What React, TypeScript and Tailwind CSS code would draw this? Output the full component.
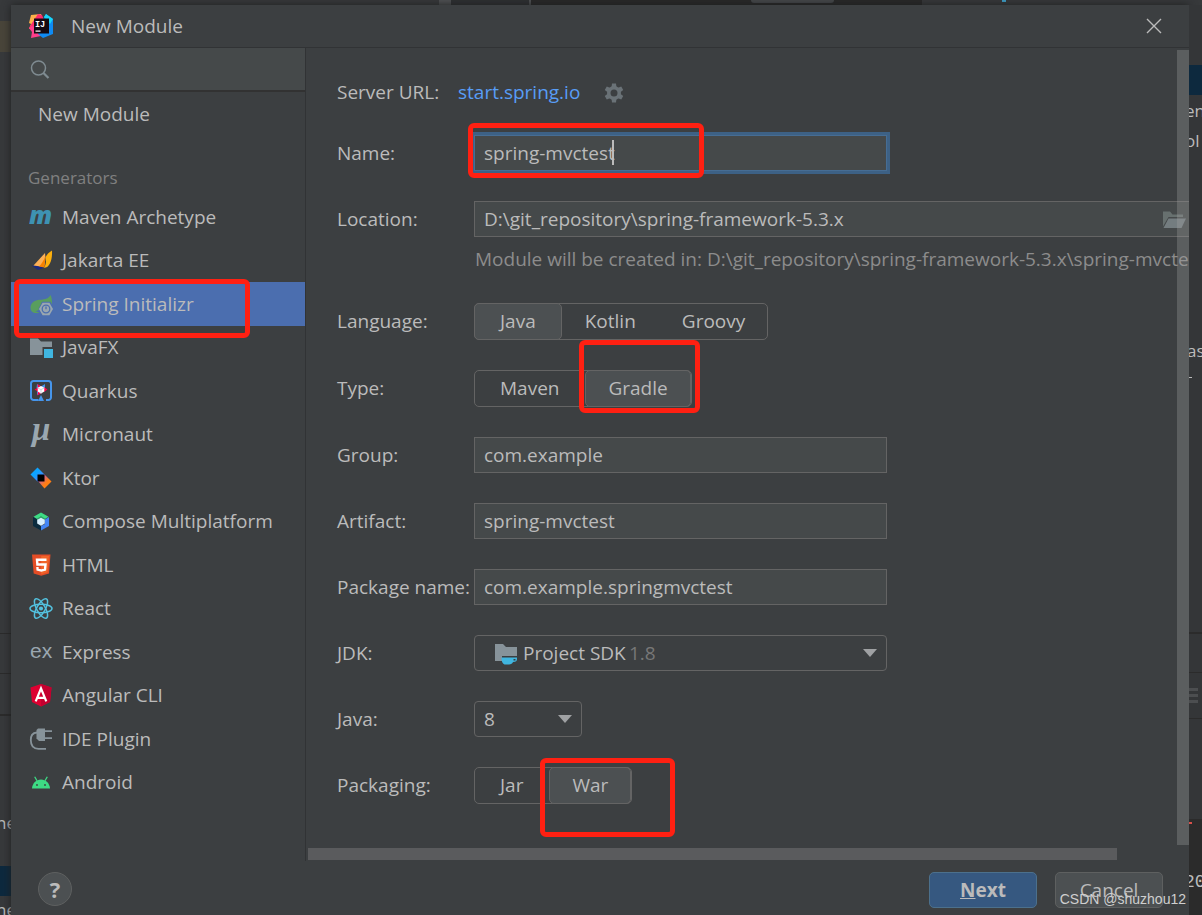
import { useState } from "react";
import type { ReactNode } from "react";

type Generator = { name: string; icon: ReactNode };

const iconText = "font-['Open_Sans',sans-serif]";

function Icon({ children, className = "size-6" }: { children: ReactNode; className?: string }) {
  return (
    <svg viewBox="0 0 24 24" className={`${className} shrink-0`} aria-hidden="true">
      {children}
    </svg>
  );
}

const generators: Generator[] = [
  {
    name: "Maven Archetype",
    icon: (
      <Icon>
        <text x="0" y="19" fontSize="25" fontWeight="800" fontStyle="italic" fill="#3e92b2" className={iconText}>
          m
        </text>
      </Icon>
    ),
  },
  {
    name: "Jakarta EE",
    icon: (
      <Icon>
        <path d="M2.500 16.500 L16 17.500 L13 19.500 L9 21 Z" fill="#1b2a7e" />
        <path d="M16 4 L4.500 16.500 L10 17.300 L15 17.300 C16.500 13 16.500 8 16 4 Z" fill="#fdb056" />
        <path d="M16.500 6.500 C15 11 13 14.500 10 17.500 L15.500 18.500 Z" fill="#f98200" />
        <path d="M23 1.500 C19 4 17.500 6 16.500 8.500 C17.500 12 17 15.500 15 18.800 C21 19 23.500 10 23 1.500 Z" fill="#fdb00d" />
      </Icon>
    ),
  },
  {
    name: "Spring Initializr",
    icon: (
      <Icon>
        <path d="M21.500 3 C20 6 17 7.500 11 7.800 C4 8.200 1.500 12 1.500 16 C1.500 19 3.500 20.500 6 21 L10.500 21 C8 19.500 6.500 19 5 19 C8 19 10 18.500 10.500 17 C11 12 15 9.500 22.800 12 C23.200 8.500 22.800 5.500 21.500 3 Z" fill="#599e5e" />
        <path d="M13 9.800 h8.500 l3.500 7.200 l-3.500 7 h-8.500 l-3.500 -7 z" fill="#4b6eaf" />
        <path d="M13.600 10.800 h6.800 l3.600 6.200 l-3.600 6.300 h-6.800 l-3.600 -6.300 z" fill="#9aa7b0" />
        <circle cx="17" cy="17" r="3.800" fill="none" stroke="#4b6eaf" strokeWidth="1.300" />
        <path d="M17 14.500 v2.800" stroke="#4b6eaf" strokeWidth="1.300" />
      </Icon>
    ),
  },
  {
    name: "JavaFX",
    icon: (
      <Icon>
        <path d="M1 2.500 h8 l3 3 h11 v5.500 h-9.500 v8 h-12.500 z" fill="#87939a" />
        <rect x="15" y="13" width="9" height="9" fill="#40b6e0" />
      </Icon>
    ),
  },
  {
    name: "Quarkus",
    icon: (
      <Icon>
        <path
          d="M9.500 21 H4.500 a2.500 2.500 0 0 1 -2.500 -2.500 V4.500 A2.500 2.500 0 0 1 4.500 2 H19.500 A2.500 2.500 0 0 1 22 4.500 V18.500 a2.500 2.500 0 0 1 -2.500 2.500 H17"
          fill="none"
          stroke="#4695eb"
          strokeWidth="2"
        />
        <path d="M12 16 L15 22 H9 Z" fill="#4695eb" />
        <path d="M8 5 L12 7.500 L7.500 9.500 Z M16 5 V9.500 L12 7.500 Z M8 16 V12 L12 14.500 Z" fill="#4695eb" />
        <path d="M8.500 5 L13 8 L9 10 Z M18.500 10.500 L15 13 V8 Z M8.500 16.500 L9 12 L12.500 14 Z M5.500 10.500 L9 8.500 V12.500 Z" fill="#ff004a" />
        <path d="M12 7 L15.300 8.800 V12.500 L12 14.500 L8.700 12.500 V8.800 Z" fill="#fff" />
        <path d="M8.700 9 L12 10.600 L15.300 9 M12 10.600 V14.500" stroke="#c9d3dc" fill="none" />
      </Icon>
    ),
  },
  {
    name: "Micronaut",
    icon: (
      <Icon>
        <text
          x="3"
          y="17"
          fontSize="33"
          fontWeight="700"
          fontStyle="italic"
          fill="#9aa7b0"
          className="font-['Liberation_Serif',serif]"
        >
          μ
        </text>
      </Icon>
    ),
  },
  {
    name: "Ktor",
    icon: (
      <Icon>
        <defs>
          <linearGradient id="ktorTop" x1="0" y1="0" x2="1" y2="1">
            <stop offset="0.4" stopColor="#0da3ff" />
            <stop offset="1" stopColor="#7a6cf5" />
          </linearGradient>
          <linearGradient id="ktorBottom" x1="0" y1="0" x2="1" y2="1">
            <stop offset="0.1" stopColor="#b750d8" />
            <stop offset="0.6" stopColor="#ff7e14" />
          </linearGradient>
        </defs>
        <path d="M1.500 8.500 L8.500 1.500 L16 9 L9 16 Z" fill="url(#ktorTop)" />
        <path d="M9 15 L15.500 8.500 L22.500 15.500 L15.500 22.500 Z" fill="url(#ktorBottom)" />
        <rect x="8.500" y="8.500" width="7" height="7" fill="#000" />
      </Icon>
    ),
  },
  {
    name: "Compose Multiplatform",
    icon: (
      <Icon>
        <path d="M12 2.500 L19.500 6.800 L16 9 L12 6.500 L8 9 L4.500 6.800 Z" fill="#3ddc84" />
        <path d="M4 7 L8.500 9.500 V14 L12 16 V20.500 L4 16 Z" fill="#0b2c3f" />
        <path d="M20 7 L16 9.500 V14 L12 16 V20.500 L20 16 Z" fill="#4285f4" />
        <path d="M12 7 L15.800 9.200 V13.600 L12 15.800 L8.200 13.600 V9.200 Z" fill="#d7effe" />
        <path d="M8.200 9.200 L12 7 L15.800 9.200" fill="none" stroke="#2aa768" strokeWidth="1.200" />
      </Icon>
    ),
  },
  {
    name: "HTML",
    icon: (
      <Icon>
        <path d="M3 1.500 H21.500 L20 20.500 L12.200 22.700 L4.700 20.500 Z" fill="#e44d26" />
        <path d="M12.200 3 H20 L18.600 19.300 L12.200 21.200 Z" fill="#f16529" />
        <path d="M17.500 6.800 H8 L8.400 11.500 H16.500 L16 16.500 L12.300 17.600 L8.600 16.500 L8.400 14" fill="none" stroke="#fff" strokeWidth="2.400" />
      </Icon>
    ),
  },
  {
    name: "React",
    icon: (
      <Icon>
        <g fill="none" stroke="#53c1de" strokeWidth="1.500">
          <ellipse cx="12" cy="11.500" rx="11" ry="4.200" />
          <ellipse cx="12" cy="11.500" rx="11" ry="4.200" transform="rotate(60 12 11.5)" />
          <ellipse cx="12" cy="11.500" rx="11" ry="4.200" transform="rotate(120 12 11.5)" />
        </g>
        <circle cx="12" cy="11.500" r="2.100" fill="#53c1de" />
      </Icon>
    ),
  },
  {
    name: "Express",
    icon: (
      <Icon>
        <text x="1" y="18" fontSize="21" fill="#9aa7b0" className="font-['Liberation_Sans',sans-serif]">
          ex
        </text>
      </Icon>
    ),
  },
  {
    name: "Angular CLI",
    icon: (
      <Icon>
        <path d="M12 0 L22.500 3.600 L21 18 L12 22.500 L3 18 L1.500 3.600 Z" fill="#dd0031" />
        <path d="M12 0 L22.500 3.600 L21 18 L12 22.500 Z" fill="#c3002f" />
        <path d="M6.700 17.300 L12 4.500 L17.300 17.300 M8.700 13.800 H15.300" fill="none" stroke="#fff" strokeWidth="2.200" />
      </Icon>
    ),
  },
  {
    name: "IDE Plugin",
    icon: (
      <Icon>
        <path d="M9 1.500 H16 V14 H10 L7.500 11.500 V3 Z" fill="#87939a" />
        <path d="M16 4.200 H23 M16 11.200 H23" stroke="#87939a" strokeWidth="1.800" />
        <path d="M8 5.500 C3 5.500 1.800 9 1.800 13 C1.800 19 4.500 21.800 9.500 21.800 H17" fill="none" stroke="#87939a" strokeWidth="1.800" />
      </Icon>
    ),
  },
  {
    name: "Android",
    icon: (
      <Icon>
        <path d="M3 17.500 C3.300 12.300 7.200 8.500 12 8.500 C16.800 8.500 20.700 12.300 21 17.500 Z" fill="#3ddc84" />
        <path d="M8 9.800 L5.700 5.800 M16 9.800 L18.300 5.800" stroke="#3ddc84" strokeWidth="1.300" />
        <circle cx="8" cy="14" r="0.900" fill="#3c3f41" />
        <circle cx="16" cy="14" r="0.900" fill="#3c3f41" />
      </Icon>
    ),
  },
];

function IdeaLogo() {
  return (
    <svg viewBox="0 0 24 24" className="size-6" aria-hidden="true">
      <path d="M2 1 L12 0 L15 8 L6 14 L0 15 L2 10 L0 9 Z" fill="#fcb04a" />
      <path d="M9 0 L13 1 L15 6 L4 17 L0 14 L3 9 Z" fill="#fe2d6c" />
      <path d="M3 12 L10 16 L12 22 L2 24 L3 18 L0 14 Z" fill="#ff3d8b" />
      <path d="M15 3 L17 0 L24 5 V20 L14 24 L9 20 L12 12 Z" fill="#0f8bf4" />
      <path d="M15 3 L17 0 L24 5 L21 10 Z" fill="#19d5f5" />
      <rect x="5" y="4.500" width="15" height="15" fill="#140a12" />
      <text x="6" y="12.500" fontSize="8.500" fontWeight="700" fill="#fff" className="font-['Liberation_Mono',monospace]">
        IJ
      </text>
      <rect x="6.500" y="16.500" width="5" height="1.200" fill="#fff" />
    </svg>
  );
}

// Red marker rectangle drawn over a control
function Mark({ className }: { className: string }) {
  return <span className={`pointer-events-none absolute z-10 rounded-md border-5 border-[#ff2012] ${className}`} />;
}

function Row({ label, id, children }: { label: string; id?: string; children: ReactNode }) {
  return (
    <div className="flex items-center">
      <label htmlFor={id} className="w-[137px] shrink-0 whitespace-nowrap">
        {label}
      </label>
      {children}
    </div>
  );
}

const fieldClass = "h-9 w-[413px] border border-[#646464] bg-[#45494a] px-[9px] outline-none";

function TextRow({ label, id, value }: { label: string; id: string; value: string }) {
  const [text, setText] = useState(value);
  return (
    <Row label={label} id={id}>
      <input id={id} value={text} onChange={(e) => setText(e.target.value)} className={fieldClass} />
    </Row>
  );
}

function Segmented({ options, initial, mark }: { options: string[]; initial: string; mark?: ReactNode }) {
  const [selected, setSelected] = useState(initial);
  return (
    <div className="relative flex h-[37px] rounded-[5px] border border-[#646464]">
      {options.map((option) => (
        <button
          key={option}
          type="button"
          aria-pressed={option === selected}
          onClick={() => setSelected(option)}
          className={`-my-px rounded-[5px] border px-[22px] first:-ml-px first:px-[25px] last:-mr-px ${
            option === selected ? "border-[#646464] bg-[#4c5052]" : "border-transparent"
          }`}
        >
          {option}
        </button>
      ))}
      {mark}
    </div>
  );
}

function Arrow() {
  return (
    <svg viewBox="0 0 14 8" className="pointer-events-none absolute top-[14px] right-[10px] h-2 w-[14px]" aria-hidden="true">
      <path d="M0 0 H14 L7 8 Z" fill="#9fa1a3" />
    </svg>
  );
}

const selectClass = "h-9 w-full appearance-none rounded-[4px] border border-[#646464] bg-[#3c3f41] outline-none";

function Sidebar() {
  const [active, setActive] = useState("Spring Initializr");
  return (
    <aside className="flex w-[295px] shrink-0 flex-col border-r border-[#313335]">
      <div className="flex h-11 items-center border-b-2 border-[#323232] bg-[#45494a] pl-[19px]">
        <svg viewBox="0 0 20 20" className="size-5 shrink-0" fill="none" stroke="#7f8b91" aria-hidden="true">
          <circle cx="8.500" cy="9" r="7" strokeWidth="1.500" />
          <path d="M13.500 14 L18.500 19" strokeWidth="2.200" />
        </svg>
        <input aria-label="Search" className="h-full min-w-0 flex-1 bg-transparent px-2 outline-none" />
      </div>
      <button type="button" className="h-11 pl-[27px] text-left">
        New Module
      </button>
      <h2 className="mt-[25px] h-[34px] pl-[17px] text-[17px] leading-[33px] text-[#808080]">Generators</h2>
      <ul>
        {generators.map(({ name, icon }) => (
          <li key={name} className="relative odd:h-11 even:h-[43px]">
            <button
              type="button"
              onClick={() => setActive(name)}
              className={`flex h-full w-full items-center gap-[9px] pl-[18px] text-left ${
                name === active ? "bg-[#4b6eaf]" : ""
              }`}
            >
              {icon}
              {name}
            </button>
            {name === "Spring Initializr" && <Mark className="-top-[3px] left-[3px] h-[59px] w-[236px]" />}
          </li>
        ))}
      </ul>
    </aside>
  );
}

function ModuleForm() {
  const [name, setName] = useState("spring-mvctest");
  const [location, setLocation] = useState("D:\\git_repository\\spring-framework-5.3.x");

  return (
    <section className="relative min-w-0 flex-1 overflow-hidden pl-[31px]">
      <form className="flex flex-col gap-[30px] pt-8 pb-[57px]">
        <div className="flex h-[25px] items-center">
          <span className="w-[121px]">Server URL:</span>
          <a href="#server" className="text-[#589df6]">
            start.spring.io
          </a>
          <button type="button" aria-label="Server settings" className="ml-6">
            <svg viewBox="0 0 20 20" className="size-5" aria-hidden="true">
              <g fill="#6a7277">
                <path
                  fillRule="evenodd"
                  d="M10 3 a7 7 0 1 1 0 14 a7 7 0 1 1 0 -14 Z M10 6.500 a3.500 3.500 0 1 0 0 7 a3.500 3.500 0 1 0 0 -7 Z"
                />
                <path d="M8 0.500 H12 L12.500 4.500 H7.500 Z M8 19.500 H12 L12.500 15.500 H7.500 Z" />
                <path d="M8 0.500 H12 L12.500 4.500 H7.500 Z M8 19.500 H12 L12.500 15.500 H7.500 Z" transform="rotate(60 10 10)" />
                <path d="M8 0.500 H12 L12.500 4.500 H7.500 Z M8 19.500 H12 L12.500 15.500 H7.500 Z" transform="rotate(120 10 10)" />
              </g>
            </svg>
          </button>
        </div>

        <Row label="Name:" id="name">
          <div className="relative">
            <input
              id="name"
              value={name}
              onChange={(e) => setName(e.target.value)}
              className="h-9 w-[413px] border border-[#466d94] bg-[#45494a] px-[9px] caret-transparent ring-3 ring-[#3d6185] outline-none"
            />
            <span className="absolute top-[5px] left-[138px] h-[25px] w-0.5 bg-[#bbbbbb]" />
            <Mark className="-top-3 -left-1.5 h-[55px] w-[236px]" />
          </div>
        </Row>

        <div className="flex flex-col gap-2">
          <Row label="Location:" id="location">
            <div className="relative shrink-0">
              <input
                id="location"
                value={location}
                onChange={(e) => setLocation(e.target.value)}
                className="h-9 w-[760px] border border-[#646464] bg-[#45494a] px-[9px] outline-none"
              />
              <svg viewBox="0 0 24 18" className="absolute top-[10px] left-[688px] h-[18px] w-6" aria-hidden="true">
                <path d="M1 0.500 H8 L10.500 3.500 H21 V6 H6.500 L1 15.500 Z" fill="#67706f" />
                <path d="M6.500 7.500 H24 L19.500 17 H1.500 Z" fill="#747d80" />
              </svg>
            </div>
          </Row>
          <p className="ml-[138px] h-7 leading-7 whitespace-nowrap text-[#8c8c8c]">
            Module will be created in: D:\git_repository\spring-framework-5.3.x\spring-mvctest
          </p>
        </div>

        <Row label="Language:">
          <Segmented options={["Java", "Kotlin", "Groovy"]} initial="Java" />
        </Row>
        <Row label="Type:">
          <Segmented
            options={["Maven", "Gradle"]}
            initial="Gradle"
            mark={<Mark className="-top-[31px] -right-[9px] h-[73px] w-[121px]" />}
          />
        </Row>
        <TextRow label="Group:" id="group" value="com.example" />
        <TextRow label="Artifact:" id="artifact" value="spring-mvctest" />
        <TextRow label="Package name:" id="package" value="com.example.springmvctest" />

        <Row label="JDK:" id="jdk">
          <div className="relative w-[413px]">
            <select id="jdk" className={`${selectClass} pl-12`}>
              <option>Project SDK</option>
            </select>
            <svg viewBox="0 0 24 24" className="pointer-events-none absolute top-[7px] left-5 size-6" aria-hidden="true">
              <path d="M1 2 h8 l3 3 h11 v9 h-15 v5 h-7 z" fill="#87939a" />
              <path
                d="M7.500 15.500 H23 V17 C23 19 22 20 19 20 C18.500 21.500 17 22.500 15 22.500 H11.500 C9 22.500 7.500 20 7.500 15.500 Z M19.500 17 V18.500 H21.500 V17 Z"
                fill="#40b6e0"
                fillRule="evenodd"
              />
            </svg>
            <span className="pointer-events-none absolute top-0 left-[155px] leading-9 text-[#777777]">1.8</span>
            <Arrow />
          </div>
        </Row>
        <Row label="Java:" id="java">
          <div className="relative w-[108px]">
            <select id="java" className={`${selectClass} pl-[9px]`}>
              <option>8</option>
            </select>
            <Arrow />
          </div>
        </Row>
        <Row label="Packaging:">
          <Segmented
            options={["Jar", "War"]}
            initial="War"
            mark={<Mark className="-top-[10px] -right-[44px] h-[79px] w-[135px]" />}
          />
        </Row>
      </form>

      {/* overlay scrollbars */}
      <div className="absolute top-0.5 right-0 bottom-4 w-3 bg-[#a6a6a6]/30" />
      <div className="absolute right-[72px] bottom-px left-0.5 h-3 bg-[#5a5b5d]" />
    </section>
  );
}

// Slivers of the editor window that stay visible around the dialog
function LeftEdge() {
  return (
    <div className="flex w-[11px] shrink-0 flex-col overflow-hidden bg-[#37393b] text-[17px]">
      <div className="mt-4 h-[31px] bg-[#49453a]" />
      <div className="mt-[581px] h-[41px] border-y border-[#2b2b2b]" />
      <div className="h-[42px] border-b-2 border-[#2b2b2b]" />
      <div className="mt-[93px] -ml-1 h-7 leading-7">ne</div>
      <div className="mt-[29px] h-[30px] bg-[#0d293e]" />
      <div className="-ml-1 h-5 leading-7">ne</div>
    </div>
  );
}

function RightEdge() {
  return (
    <div className="flex w-[13px] shrink-0 flex-col overflow-hidden bg-[#343638] text-[17px]">
      <div className="mt-[60px] h-[30px] bg-[#0d293e]" />
      <div className="mt-px -ml-1 h-[30px] leading-[30px]">en</div>
      <div className="-ml-1 h-[30px] leading-[30px]">ol</div>
      <div className="mt-[180px] -ml-0.5 h-[30px] leading-[30px]">as</div>
      <div className="mt-[11px] h-px w-[3px] bg-[#bbbbbb]" />
      <div className="mt-[254px] h-[41px] border-t-2 border-b border-[#2b2b2b]" />
      <div className="flex h-[46px] flex-col justify-center gap-[3px] border-b border-[#2b2b2b]">
        <span className="h-[3px] w-[9px] bg-[#4c4e50]" />
        <span className="h-[3px] w-[9px] bg-[#4c4e50]" />
        <span className="h-[3px] w-[9px] bg-[#4c4e50]" />
      </div>
      <div className="mt-[100px] flex-1 bg-[#2b2b2b] font-['Liberation_Mono',monospace]">
        <div className="h-[5px] w-[3px] border-b-2 border-[#d8504a]" />
        <div className="mt-[43px] -ml-[5px] h-[30px] text-[18px] leading-[30px]">20</div>
      </div>
    </div>
  );
}

export default function App() {
  return (
    <div className="relative flex min-h-screen flex-col overflow-hidden bg-[#37393b] font-['Open_Sans','Noto_Sans',sans-serif] text-[19px] text-[#bbbbbb]">
      <div className="flex h-[5px] pl-[439px]">
        <div className="w-3 bg-[#505254]" />
        <div className="w-[78px] bg-[#2e3032]" />
        <div className="w-0.5 bg-[#505254]" />
        <div className="w-[220px] bg-[#282828]" />
        <div className="w-[83px] bg-[#282828]">
          <div className="h-[3px] rounded-b-sm bg-[#46494b]" />
        </div>
        <div className="w-[88px] bg-[#282828]" />
        <div className="ml-20 h-0.5 w-1 bg-[#40a5d0]" />
      </div>
      <div className="flex flex-1">
        <LeftEdge />
        <main className="flex min-w-0 flex-1 flex-col bg-[#3c3f41] shadow-[0_0_8px_#1e1f20]">
          <header className="flex h-[43px] items-center border-b border-[#313335] pr-[27px] pl-[18px]">
            <IdeaLogo />
            <h1 className="ml-[18px] flex-1">New Module</h1>
            <button type="button" aria-label="Close">
              <svg viewBox="0 0 16 16" className="size-4" stroke="#bbbbbb" strokeWidth="1.400" aria-hidden="true">
                <path d="M1 1 L15 15 M15 1 L1 15" />
              </svg>
            </button>
          </header>
          <div className="flex h-[813px]">
            <Sidebar />
            <ModuleForm />
          </div>
          <footer className="flex flex-1 items-start gap-[18px] pt-[11px] pr-[26px] pb-[7px] pl-[27px]">
            <button
              type="button"
              aria-label="Help"
              className="mr-auto size-[34px] rounded-full border border-[#5e6060] bg-[#4c5052] text-[22px] leading-8 font-bold"
            >
              ?
            </button>
            <button type="button" className="h-9 w-[108px] rounded-[5px] border border-[#4c708c] bg-[#365880] font-bold">
              <span className="underline">N</span>ext
            </button>
            <button type="button" className="h-9 w-[108px] rounded-[5px] border border-[#5e6060] bg-[#4c5052]">
              Cancel
            </button>
          </footer>
        </main>
        <RightEdge />
      </div>
      <span className="absolute right-4 bottom-1.5 font-['Liberation_Sans',sans-serif] text-[14px] text-[#cfcfcf]">
        CSDN @shuzhou12
      </span>
    </div>
  );
}
